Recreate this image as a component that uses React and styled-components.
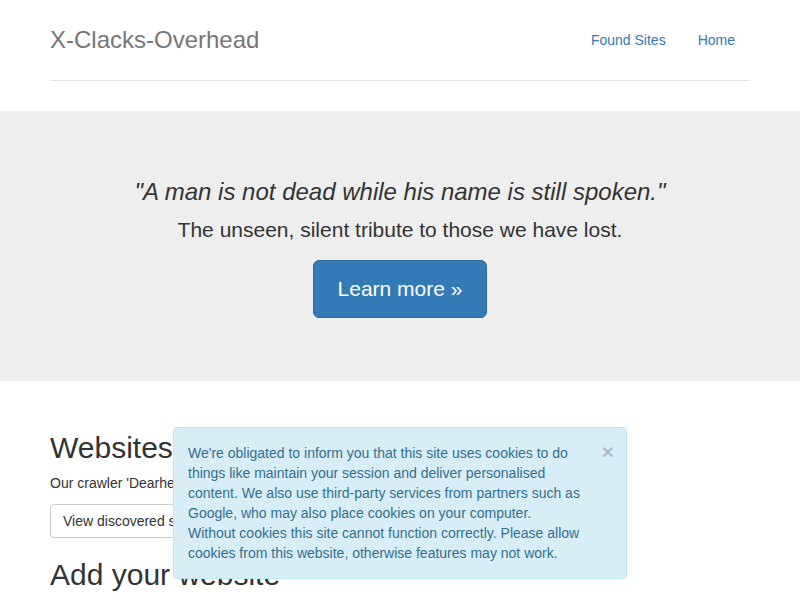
import React from "react";
import styled, { createGlobalStyle } from "styled-components";

const textColor = "#333333";
const linkColor = "#337ab7";

const GlobalCSS = createGlobalStyle`
  html, body {
    margin: 0;
    padding: 0;
    background: #fff;
  }
  body {
    padding-top: 20px;
    font-family: "Liberation Sans", Arial, Helvetica, sans-serif;
    font-size: 14px;
    line-height: 1.42857;
    color: ${textColor};
  }
  * {
    box-sizing: border-box;
  }
`;

const Container = styled.div`
  width: 700px;
  margin: 0 auto;
`;

const Header = styled.header`
  display: flex;
  justify-content: space-between;
  align-items: flex-start;
  padding-bottom: 20px;
  border-bottom: 1px solid #e5e5e5;
`;

const Brand = styled.h3`
  margin: 0;
  font-size: 24px;
  font-weight: 500;
  line-height: 40px;
  color: #777;
`;

const Nav = styled.ul`
  display: flex;
  gap: 2px;
  margin: 0;
  padding: 0;
  list-style: none;
`;

const NavLink = styled.a`
  display: block;
  padding: 10px 15px;
  line-height: 20px;
  color: ${linkColor};
  text-decoration: none;
  border-radius: 4px;
`;

const Jumbotron = styled.section`
  margin: 30px 0;
  padding: 48px 0;
  background: #eee;
  text-align: center;
`;

const Quote = styled.h1`
  margin: 20px 0 10px;
  font-size: 24px;
  font-style: italic;
  font-weight: 500;
  line-height: 1.1;
`;

const Lead = styled.p`
  margin: 0 0 15px;
  font-size: 21px;
  line-height: 30px;
  font-weight: 200;
`;

const BigButton = styled.a`
  display: inline-block;
  padding: 14px 24px;
  font-size: 21px;
  line-height: 28px;
  color: #fff;
  background: ${linkColor};
  border: 1px solid #2e6da4;
  border-radius: 6px;
  text-decoration: none;
  vertical-align: middle;
`;

const Marketing = styled.div`
  display: flow-root;
`;

const Heading = styled.h2`
  margin: 20px 0 10px;
  font-size: 30px;
  font-weight: 500;
  line-height: 1.1;
`;

const Para = styled.p`
  margin: 0 0 10px;
`;

const DefaultButton = styled.a`
  display: inline-block;
  padding: 6px 12px;
  font-size: 14px;
  line-height: 20px;
  color: ${textColor};
  background: #fff;
  border: 1px solid #ccc;
  border-radius: 4px;
  text-decoration: none;
`;

const CookieAlert = styled.div`
  position: fixed;
  left: 50%;
  bottom: 21px;
  transform: translateX(-50%);
  width: 454px;
  padding: 15px 35px 15px 14px;
  color: #31708f;
  background: #d9edf7;
  border: 1px solid #bce8f1;
  border-radius: 4px;
  line-height: 20px;
`;

const Close = styled.button`
  float: right;
  position: relative;
  top: -2px;
  right: -23px;
  padding: 0;
  border: 0;
  background: transparent;
  font-family: inherit;
  font-size: 21px;
  font-weight: 700;
  line-height: 1;
  color: #000;
  opacity: 0.2;
  text-shadow: 0 1px 0 #fff;
  cursor: pointer;
`;

export default function App() {
  return (
    <>
      <GlobalCSS />
      <Container>
        <Header>
          <Brand>X-Clacks-Overhead</Brand>
          <Nav>
            <li>
              <NavLink href="#">Found Sites</NavLink>
            </li>
            <li>
              <NavLink href="#">Home</NavLink>
            </li>
          </Nav>
        </Header>
      </Container>

      <Jumbotron>
        <Quote>"A man is not dead while his name is still spoken."</Quote>
        <Lead>The unseen, silent tribute to those we have lost.</Lead>
        <Lead>
          <BigButton href="#">Learn more »</BigButton>
        </Lead>
      </Jumbotron>

      <Container>
        <Marketing>
          <Heading>Websites</Heading>
          <Para>
            Our crawler 'Dearheart' has found websites sending the header.
          </Para>
          <DefaultButton href="#">View discovered sites »</DefaultButton>
          <Heading>Add your website</Heading>
        </Marketing>
      </Container>

      <CookieAlert>
        <Close aria-label="Close">×</Close>
        We're obligated to inform you that this site uses cookies to do things
        like maintain your session and deliver personalised content. We also
        use third-party services from partners such as Google, who may also
        place cookies on your computer.
        <br />
        Without cookies this site cannot function correctly. Please allow
        cookies from this website, otherwise features may not work.
      </CookieAlert>
    </>
  );
}
